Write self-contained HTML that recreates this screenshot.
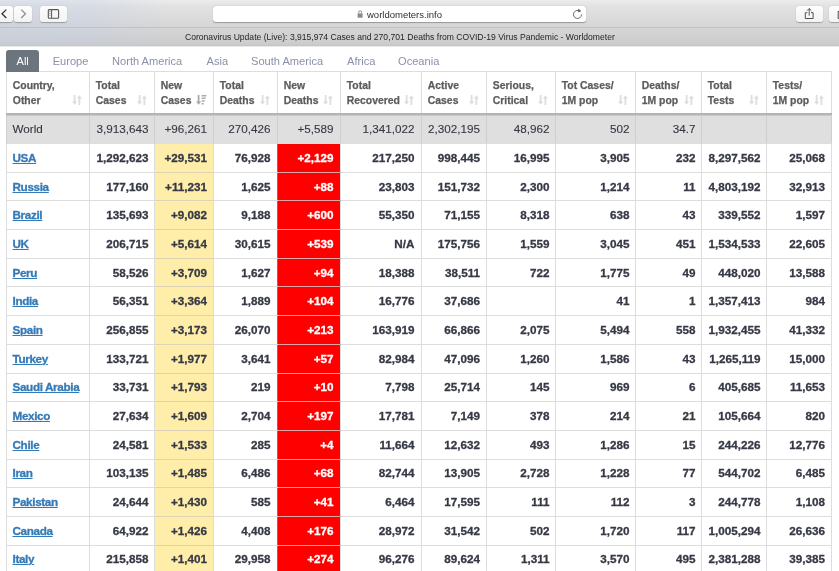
<!DOCTYPE html>
<html><head><meta charset="utf-8"><title>Worldometer</title>
<style>
html,body{margin:0;padding:0;}
body{width:839px;height:571px;overflow:hidden;background:#fff;font-family:"Liberation Sans",Arial,sans-serif;position:relative;}
#tb{position:absolute;left:0;top:0;width:839px;height:28px;background:linear-gradient(to right,rgba(190,204,232,.32) 0,rgba(190,204,232,.28) 95px,rgba(190,204,232,0) 165px),linear-gradient(#ececec,#e2e2e2 22%,#d6d6d6);border-bottom:1px solid #c2c2c4;box-sizing:border-box;}
.btn{position:absolute;top:6px;height:16px;background:linear-gradient(#fdfdfd,#f3f3f3);border-radius:3px;box-shadow:0 0.5px 1px rgba(0,0,0,.28);}
#url{position:absolute;left:213px;top:6px;width:373px;height:16px;background:#fff;border-radius:3px;box-shadow:0 0.5px 1px rgba(0,0,0,.3);font-size:9.5px;color:#2e2e2e;line-height:16px;}
#url span{will-change:transform;position:absolute;left:153.7px;top:0.5px;}
#ico{position:absolute;left:0;top:0;}
#tabbar{position:absolute;left:0;top:28px;width:839px;height:18px;background:linear-gradient(to right,rgba(190,204,232,.3) 0,rgba(190,204,232,.26) 95px,rgba(190,204,232,0) 165px),linear-gradient(#d6d6d6,#cdcdcd 85%,#c6c6c6);box-shadow:0 1px 0 #e9e9e9;box-sizing:border-box;font-size:8.59px;color:#262626;text-align:left;padding-left:184.5px;line-height:19px;white-space:nowrap;}
#tabbar span{will-change:transform;display:inline-block;}
#tabs{z-index:2;will-change:transform;position:absolute;left:7px;top:50px;height:22px;font-size:11.1px;color:#8b90a9;}
#tabs span{position:absolute;top:0;line-height:22px;white-space:nowrap;}
#tabs .act{left:-0.6px;width:32.5px;height:22px;background:#6c757d;color:#fff;border-radius:3px 3px 0 0;text-align:center;}
table{will-change:transform;position:absolute;left:6px;top:71px;border-collapse:collapse;table-layout:fixed;width:825px;font-size:11.7px;}
th,td{border:1px solid #ddd;box-sizing:border-box;padding:0 6.5px 1px 5.5px;}
th{-webkit-text-stroke:0.25px;height:42px;text-align:left;vertical-align:top;color:#5c5c5c;font-weight:bold;font-size:10.4px;padding:0 0 0 5.8px;border-bottom:2px solid #b4b4b4;position:relative;}
.h{line-height:14.75px;padding-top:7.2px;white-space:nowrap;}
.si{position:absolute;left:calc(100% - 17px);top:23px;}
td{-webkit-text-stroke:0.3px;height:28.7px;text-align:right;font-weight:bold;color:#363945;white-space:nowrap;}
td.c0{text-align:left;}
td.c0 a{color:#337ab7;text-decoration:underline;text-decoration-thickness:0.8px;text-underline-offset:1.2px;letter-spacing:-0.35px;}
td.c1,td.c7,td.c8,td.c9,td.c10{padding-right:5.5px;}
td.c6,td.c11{padding-right:6px;}
td.c2{padding-right:6px;background:#ffeeaa;border-top-color:#ddd5b6;border-bottom-color:#ddd5b6;}
td.c3{border-right-color:#ff3a3a;}
td.c4{background:#ff0000;color:#fff;border-top-color:#dea4a4;border-bottom-color:#dea4a4;border-left-color:#ff3a3a;}
tr.w td{-webkit-text-stroke:0.12px;border-color:#ddd #cecece;background:#dfdfdf;color:#363945;font-weight:normal;height:30px;box-shadow:inset 0 1px 0 #c8c8c8;}
</style></head><body>
<div id="tb">
 <div class="btn" style="left:-6px;width:19px"></div>
 <div class="btn" style="left:14px;width:18px"></div>
 <div class="btn" style="left:40px;width:27px"></div>
 <div id="url"><span>worldometers.info</span></div>
 <div class="btn" style="left:796px;width:26.5px"></div>
 <div class="btn" style="left:829px;width:27px"></div>
 <svg id="ico" width="839" height="27" viewBox="0 0 839 27">
  <path d="M6.3 9.6L2 13.8l4.3 4.2" fill="none" stroke="#333" stroke-width="1.3"/>
  <path d="M21.2 9.6l4.3 4.2-4.3 4.2" fill="none" stroke="#8c8c8c" stroke-width="1.2"/>
  <rect x="48.3" y="9.6" width="10.3" height="8.6" rx="1" fill="none" stroke="#555" stroke-width="1.1"/>
  <path d="M51.6 9.6v8.6" stroke="#555" stroke-width="1"/>
  <path d="M49.2 11.6h1.6M49.2 13.4h1.6M49.2 15.2h1.6" stroke="#888" stroke-width="0.7"/>
  <path d="M357.6 13.4h5v4.3h-5z" fill="#8a8a8a"/>
  <path d="M358.7 13.4v-1.3a1.4 1.4 0 0 1 2.8 0v1.3" fill="none" stroke="#8a8a8a" stroke-width="0.9"/>
  <path d="M580.3 11.6a4 4 0 1 0 1.2 2.9" fill="none" stroke="#666" stroke-width="1"/>
  <path d="M578.2 8.6l3 2.3-3.2 1.6z" fill="#666"/>
  <path d="M807.4 12.7h-2.1v5.8h7.8v-5.8h-2.1" fill="none" stroke="#505050" stroke-width="1"/>
  <path d="M809.2 15.6V8.8M807.1 10.6l2.1-2.1 2.1 2.1" fill="none" stroke="#505050" stroke-width="1"/>
  <rect x="838.2" y="11.4" width="4" height="7" fill="none" stroke="#505050" stroke-width="1"/>
 </svg>
</div>
<div id="tabbar"><span>Coronavirus Update (Live): 3,915,974 Cases and 270,701 Deaths from COVID-19 Virus Pandemic - Worldometer</span></div>
<div id="tabs"><span class="act">All</span><span style="left:45.7px">Europe</span><span style="left:105px">North America</span><span style="left:199.5px">Asia</span><span style="left:244px">South America</span><span style="left:340px">Africa</span><span style="left:391px">Oceania</span></div>
<table><colgroup><col style="width:83px"><col style="width:65px"><col style="width:59px"><col style="width:64px"><col style="width:63px"><col style="width:81px"><col style="width:65px"><col style="width:69px"><col style="width:80px"><col style="width:66px"><col style="width:65px"><col style="width:65px"></colgroup><thead><tr><th><div class="h">Country,<br>Other<svg class="si" width="10" height="10" viewBox="0 0 10 10"><path d="M2.6 0V8 M7.4 10V2" fill="none" stroke="#dddddd" stroke-width="1.8"/><path d="M0 6.6h5.2L2.6 9.8z M4.8 3.4h5.2L7.4 0.2z" fill="#dddddd"/></svg></div></th><th><div class="h">Total<br>Cases<svg class="si" width="10" height="10" viewBox="0 0 10 10"><path d="M2.6 0V8 M7.4 10V2" fill="none" stroke="#dddddd" stroke-width="1.8"/><path d="M0 6.6h5.2L2.6 9.8z M4.8 3.4h5.2L7.4 0.2z" fill="#dddddd"/></svg></div></th><th><div class="h">New<br>Cases<svg class="si" width="11" height="10" viewBox="0 0 11 10"><path d="M2.6 0V8" fill="none" stroke="#a8a8a8" stroke-width="1.8"/><path d="M0 6.6h5.2L2.6 9.8z" fill="#a8a8a8"/><path d="M5.6 0.6h4.8 M5.6 3.3h4 M5.6 6h3.2 M5.6 8.7h2.2" stroke="#acacac" stroke-width="1.6"/></svg></div></th><th><div class="h">Total<br>Deaths<svg class="si" width="10" height="10" viewBox="0 0 10 10"><path d="M2.6 0V8 M7.4 10V2" fill="none" stroke="#dddddd" stroke-width="1.8"/><path d="M0 6.6h5.2L2.6 9.8z M4.8 3.4h5.2L7.4 0.2z" fill="#dddddd"/></svg></div></th><th><div class="h">New<br>Deaths<svg class="si" width="10" height="10" viewBox="0 0 10 10"><path d="M2.6 0V8 M7.4 10V2" fill="none" stroke="#dddddd" stroke-width="1.8"/><path d="M0 6.6h5.2L2.6 9.8z M4.8 3.4h5.2L7.4 0.2z" fill="#dddddd"/></svg></div></th><th><div class="h">Total<br>Recovered<svg class="si" width="10" height="10" viewBox="0 0 10 10"><path d="M2.6 0V8 M7.4 10V2" fill="none" stroke="#dddddd" stroke-width="1.8"/><path d="M0 6.6h5.2L2.6 9.8z M4.8 3.4h5.2L7.4 0.2z" fill="#dddddd"/></svg></div></th><th><div class="h">Active<br>Cases<svg class="si" width="10" height="10" viewBox="0 0 10 10"><path d="M2.6 0V8 M7.4 10V2" fill="none" stroke="#dddddd" stroke-width="1.8"/><path d="M0 6.6h5.2L2.6 9.8z M4.8 3.4h5.2L7.4 0.2z" fill="#dddddd"/></svg></div></th><th><div class="h">Serious,<br>Critical<svg class="si" width="10" height="10" viewBox="0 0 10 10"><path d="M2.6 0V8 M7.4 10V2" fill="none" stroke="#dddddd" stroke-width="1.8"/><path d="M0 6.6h5.2L2.6 9.8z M4.8 3.4h5.2L7.4 0.2z" fill="#dddddd"/></svg></div></th><th><div class="h">Tot Cases/<br>1M pop<svg class="si" width="10" height="10" viewBox="0 0 10 10"><path d="M2.6 0V8 M7.4 10V2" fill="none" stroke="#dddddd" stroke-width="1.8"/><path d="M0 6.6h5.2L2.6 9.8z M4.8 3.4h5.2L7.4 0.2z" fill="#dddddd"/></svg></div></th><th><div class="h">Deaths/<br>1M pop<svg class="si" width="10" height="10" viewBox="0 0 10 10"><path d="M2.6 0V8 M7.4 10V2" fill="none" stroke="#dddddd" stroke-width="1.8"/><path d="M0 6.6h5.2L2.6 9.8z M4.8 3.4h5.2L7.4 0.2z" fill="#dddddd"/></svg></div></th><th><div class="h">Total<br>Tests<svg class="si" width="10" height="10" viewBox="0 0 10 10"><path d="M2.6 0V8 M7.4 10V2" fill="none" stroke="#dddddd" stroke-width="1.8"/><path d="M0 6.6h5.2L2.6 9.8z M4.8 3.4h5.2L7.4 0.2z" fill="#dddddd"/></svg></div></th><th><div class="h">Tests/<br>1M pop<svg class="si" width="10" height="10" viewBox="0 0 10 10"><path d="M2.6 0V8 M7.4 10V2" fill="none" stroke="#dddddd" stroke-width="1.8"/><path d="M0 6.6h5.2L2.6 9.8z M4.8 3.4h5.2L7.4 0.2z" fill="#dddddd"/></svg></div></th></tr></thead><tbody><tr class="w"><td class="c0">World</td><td class="c1">3,913,643</td><td class="c2">+96,261</td><td class="c3">270,426</td><td class="c4">+5,589</td><td class="c5">1,341,022</td><td class="c6">2,302,195</td><td class="c7">48,962</td><td class="c8">502</td><td class="c9">34.7</td><td class="c10"></td><td class="c11"></td></tr><tr><td class="c0"><a>USA</a></td><td class="c1">1,292,623</td><td class="c2">+29,531</td><td class="c3">76,928</td><td class="c4">+2,129</td><td class="c5">217,250</td><td class="c6">998,445</td><td class="c7">16,995</td><td class="c8">3,905</td><td class="c9">232</td><td class="c10">8,297,562</td><td class="c11">25,068</td></tr><tr><td class="c0"><a>Russia</a></td><td class="c1">177,160</td><td class="c2">+11,231</td><td class="c3">1,625</td><td class="c4">+88</td><td class="c5">23,803</td><td class="c6">151,732</td><td class="c7">2,300</td><td class="c8">1,214</td><td class="c9">11</td><td class="c10">4,803,192</td><td class="c11">32,913</td></tr><tr><td class="c0"><a>Brazil</a></td><td class="c1">135,693</td><td class="c2">+9,082</td><td class="c3">9,188</td><td class="c4">+600</td><td class="c5">55,350</td><td class="c6">71,155</td><td class="c7">8,318</td><td class="c8">638</td><td class="c9">43</td><td class="c10">339,552</td><td class="c11">1,597</td></tr><tr><td class="c0"><a>UK</a></td><td class="c1">206,715</td><td class="c2">+5,614</td><td class="c3">30,615</td><td class="c4">+539</td><td class="c5">N/A</td><td class="c6">175,756</td><td class="c7">1,559</td><td class="c8">3,045</td><td class="c9">451</td><td class="c10">1,534,533</td><td class="c11">22,605</td></tr><tr><td class="c0"><a>Peru</a></td><td class="c1">58,526</td><td class="c2">+3,709</td><td class="c3">1,627</td><td class="c4">+94</td><td class="c5">18,388</td><td class="c6">38,511</td><td class="c7">722</td><td class="c8">1,775</td><td class="c9">49</td><td class="c10">448,020</td><td class="c11">13,588</td></tr><tr><td class="c0"><a>India</a></td><td class="c1">56,351</td><td class="c2">+3,364</td><td class="c3">1,889</td><td class="c4">+104</td><td class="c5">16,776</td><td class="c6">37,686</td><td class="c7"></td><td class="c8">41</td><td class="c9">1</td><td class="c10">1,357,413</td><td class="c11">984</td></tr><tr><td class="c0"><a>Spain</a></td><td class="c1">256,855</td><td class="c2">+3,173</td><td class="c3">26,070</td><td class="c4">+213</td><td class="c5">163,919</td><td class="c6">66,866</td><td class="c7">2,075</td><td class="c8">5,494</td><td class="c9">558</td><td class="c10">1,932,455</td><td class="c11">41,332</td></tr><tr><td class="c0"><a>Turkey</a></td><td class="c1">133,721</td><td class="c2">+1,977</td><td class="c3">3,641</td><td class="c4">+57</td><td class="c5">82,984</td><td class="c6">47,096</td><td class="c7">1,260</td><td class="c8">1,586</td><td class="c9">43</td><td class="c10">1,265,119</td><td class="c11">15,000</td></tr><tr><td class="c0"><a>Saudi Arabia</a></td><td class="c1">33,731</td><td class="c2">+1,793</td><td class="c3">219</td><td class="c4">+10</td><td class="c5">7,798</td><td class="c6">25,714</td><td class="c7">145</td><td class="c8">969</td><td class="c9">6</td><td class="c10">405,685</td><td class="c11">11,653</td></tr><tr><td class="c0"><a>Mexico</a></td><td class="c1">27,634</td><td class="c2">+1,609</td><td class="c3">2,704</td><td class="c4">+197</td><td class="c5">17,781</td><td class="c6">7,149</td><td class="c7">378</td><td class="c8">214</td><td class="c9">21</td><td class="c10">105,664</td><td class="c11">820</td></tr><tr><td class="c0"><a>Chile</a></td><td class="c1">24,581</td><td class="c2">+1,533</td><td class="c3">285</td><td class="c4">+4</td><td class="c5">11,664</td><td class="c6">12,632</td><td class="c7">493</td><td class="c8">1,286</td><td class="c9">15</td><td class="c10">244,226</td><td class="c11">12,776</td></tr><tr><td class="c0"><a>Iran</a></td><td class="c1">103,135</td><td class="c2">+1,485</td><td class="c3">6,486</td><td class="c4">+68</td><td class="c5">82,744</td><td class="c6">13,905</td><td class="c7">2,728</td><td class="c8">1,228</td><td class="c9">77</td><td class="c10">544,702</td><td class="c11">6,485</td></tr><tr><td class="c0"><a>Pakistan</a></td><td class="c1">24,644</td><td class="c2">+1,430</td><td class="c3">585</td><td class="c4">+41</td><td class="c5">6,464</td><td class="c6">17,595</td><td class="c7">111</td><td class="c8">112</td><td class="c9">3</td><td class="c10">244,778</td><td class="c11">1,108</td></tr><tr><td class="c0"><a>Canada</a></td><td class="c1">64,922</td><td class="c2">+1,426</td><td class="c3">4,408</td><td class="c4">+176</td><td class="c5">28,972</td><td class="c6">31,542</td><td class="c7">502</td><td class="c8">1,720</td><td class="c9">117</td><td class="c10">1,005,294</td><td class="c11">26,636</td></tr><tr><td class="c0"><a>Italy</a></td><td class="c1">215,858</td><td class="c2">+1,401</td><td class="c3">29,958</td><td class="c4">+274</td><td class="c5">96,276</td><td class="c6">89,624</td><td class="c7">1,311</td><td class="c8">3,570</td><td class="c9">495</td><td class="c10">2,381,288</td><td class="c11">39,385</td></tr></tbody></table>
</body></html>
